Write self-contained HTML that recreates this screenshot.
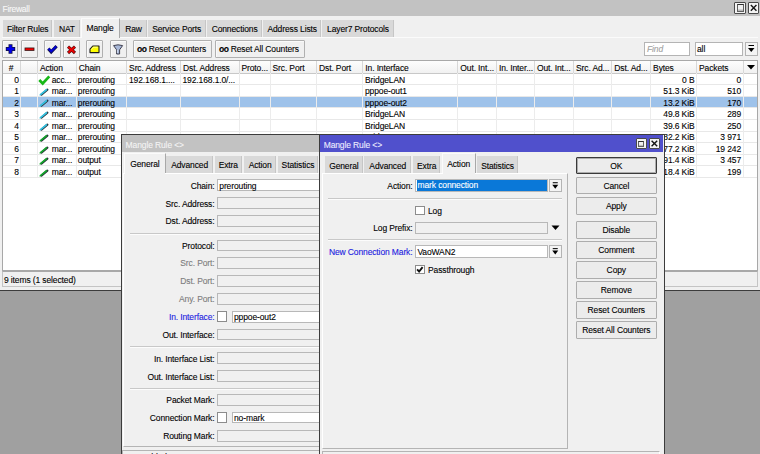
<!DOCTYPE html>
<html><head><meta charset="utf-8"><style>
html,body{margin:0;padding:0}
body{width:760px;height:454px;overflow:hidden;position:relative;background:#a0a0a0;font-family:"Liberation Sans",sans-serif;font-size:8.5px;letter-spacing:-0.12px;color:#000}
div{position:absolute}
.t{position:absolute;white-space:nowrap;line-height:10px;-webkit-text-stroke:0.1px currentColor}
svg{overflow:visible}
</style></head><body>
<div style="left:0.00px;top:0.00px;width:760.00px;height:290.00px;background:#f0f0f0"></div><div style="left:0.00px;top:290.00px;width:760.00px;height:1.20px;background:#3c3c3c"></div><div style="left:0.00px;top:0.00px;width:760.00px;height:15.60px;background:#c2c2c2"></div><span class="t" style="left:2.60px;top:3.60px;color:#f8f8f8;letter-spacing:-0.3px">Firewall</span><div style="left:734.40px;top:1.90px;width:11.40px;height:11.80px;border:1px solid #4a4a4a;box-sizing:border-box;background:#f4f4f4;border-radius:1px"></div><div style="left:737.00px;top:4.00px;width:7.00px;height:8.00px;border:1px solid #606060;border-top:1.5px solid #303030;box-sizing:border-box;background:linear-gradient(#f0f0f0 60%,#a8a8a8)"></div><div style="left:747.60px;top:1.90px;width:11.30px;height:11.80px;border:1px solid #4a4a4a;box-sizing:border-box;background:#f4f4f4;border-radius:1px"></div><svg style="position:absolute;left:747.60px;top:1.90px" width="11.30" height="11.80"><path d="M2.85 3.10L8.45 8.70M8.45 3.10L2.85 8.70" stroke="#151515" stroke-width="1.4"/></svg><div style="left:2.00px;top:37.00px;width:756.00px;height:1.00px;background:#fbfbfb"></div><div style="left:3.00px;top:20.40px;width:49.40px;height:16.60px;background:#d9d9d9;border-right:1px solid #c6c6c6;box-sizing:border-box"></div><span class="t" style="left:-22.30px;width:100px;text-align:center;top:24.00px;">Filter Rules</span><div style="left:54.30px;top:20.40px;width:25.30px;height:16.60px;background:#d9d9d9;border-right:1px solid #c6c6c6;box-sizing:border-box"></div><span class="t" style="left:16.95px;width:100px;text-align:center;top:24.00px;">NAT</span><div style="left:80.60px;top:17.60px;width:39.00px;height:20.40px;background:#f0f0f0;border:1px solid #fbfbfb;border-right:1px solid #a8a8a8;border-bottom:none;box-sizing:border-box"></div><span class="t" style="left:50.10px;width:100px;text-align:center;top:22.70px;">Mangle</span><div style="left:120.40px;top:20.40px;width:26.20px;height:16.60px;background:#d9d9d9;border-right:1px solid #c6c6c6;box-sizing:border-box"></div><span class="t" style="left:83.50px;width:100px;text-align:center;top:24.00px;">Raw</span><div style="left:147.60px;top:20.40px;width:58.20px;height:16.60px;background:#d9d9d9;border-right:1px solid #c6c6c6;box-sizing:border-box"></div><span class="t" style="left:126.70px;width:100px;text-align:center;top:24.00px;">Service Ports</span><div style="left:206.80px;top:20.40px;width:55.60px;height:16.60px;background:#d9d9d9;border-right:1px solid #c6c6c6;box-sizing:border-box"></div><span class="t" style="left:184.60px;width:100px;text-align:center;top:24.00px;">Connections</span><div style="left:263.40px;top:20.40px;width:57.60px;height:16.60px;background:#d9d9d9;border-right:1px solid #c6c6c6;box-sizing:border-box"></div><span class="t" style="left:242.20px;width:100px;text-align:center;top:24.00px;">Address Lists</span><div style="left:322.00px;top:20.40px;width:72.00px;height:16.60px;background:#d9d9d9;border-right:1px solid #c6c6c6;box-sizing:border-box"></div><span class="t" style="left:308.00px;width:100px;text-align:center;top:24.00px;">Layer7 Protocols</span><div style="left:1.60px;top:40.20px;width:16.90px;height:17.40px;border:1px solid #b0b0b0;box-sizing:border-box;border-radius:1px;background:#f0f0f0;box-shadow:inset 1px 1px 0 #fafafa"></div><div style="left:21.00px;top:40.20px;width:16.60px;height:17.40px;border:1px solid #b0b0b0;box-sizing:border-box;border-radius:1px;background:#f0f0f0;box-shadow:inset 1px 1px 0 #fafafa"></div><div style="left:44.00px;top:40.20px;width:16.60px;height:17.40px;border:1px solid #b0b0b0;box-sizing:border-box;border-radius:1px;background:#f0f0f0;box-shadow:inset 1px 1px 0 #fafafa"></div><div style="left:63.00px;top:40.20px;width:17.00px;height:17.40px;border:1px solid #b0b0b0;box-sizing:border-box;border-radius:1px;background:#f0f0f0;box-shadow:inset 1px 1px 0 #fafafa"></div><div style="left:86.00px;top:40.20px;width:17.00px;height:17.40px;border:1px solid #b0b0b0;box-sizing:border-box;border-radius:1px;background:#f0f0f0;box-shadow:inset 1px 1px 0 #fafafa"></div><div style="left:109.50px;top:40.20px;width:17.00px;height:17.40px;border:1px solid #b0b0b0;box-sizing:border-box;border-radius:1px;background:#f0f0f0;box-shadow:inset 1px 1px 0 #fafafa"></div><svg style="position:absolute;left:0;top:0" width="760" height="60"><path d="M5.8 49H15.2M10.5 44.3V53.7" stroke="#101040" stroke-width="3.9"/><path d="M6.6 49H14.4M10.5 45.1V52.9" stroke="#0000f0" stroke-width="2.3"/><path d="M24.6 49.2H34.4" stroke="#301010" stroke-width="3.3"/><path d="M25.4 49.2H33.6" stroke="#f00000" stroke-width="1.8"/><path d="M48.3 48.6L51.2 51.8L56.6 46.2" stroke="#101050" stroke-width="3.2" fill="none"/><path d="M48.6 48.6L51.2 51.4L56.3 46.4" stroke="#0000d8" stroke-width="2" fill="none"/><path d="M68 46.6L75 53M75 46.6L68 53" stroke="#501010" stroke-width="3.1"/><path d="M68.4 47L74.6 52.6M74.6 47L68.4 52.6" stroke="#f00000" stroke-width="1.9"/><path d="M90 49.2L92.8 46H99V52.6H90Z" fill="#ffff00" stroke="#1a1a1a" stroke-width="1.1" stroke-linejoin="round"/><path d="M91.3 49.6L93.4 47.2H97.6" stroke="#ffffa8" stroke-width="0.9" fill="none"/><path d="M113.6 45.6Q118 44 122.6 45.6L119.6 49.8V54H116.6V49.8Z" fill="#a8b8d8" stroke="#404050" stroke-width="1" stroke-linejoin="round"/><path d="M117.4 50V53" stroke="#e0e8f8" stroke-width="0.8"/></svg><div style="left:133.00px;top:40.20px;width:79.00px;height:17.40px;border:1px solid #b0b0b0;box-sizing:border-box;border-radius:1px;background:#f0f0f0;box-shadow:inset 1px 1px 0 #fafafa"></div><div style="left:215.00px;top:40.20px;width:90.00px;height:17.40px;border:1px solid #b0b0b0;box-sizing:border-box;border-radius:1px;background:#f0f0f0;box-shadow:inset 1px 1px 0 #fafafa"></div><span class="t" style="left:137.00px;top:44.00px;"><b style='letter-spacing:-0.5px'>oo</b> Reset Counters</span><span class="t" style="left:219.00px;top:44.00px;"><b style='letter-spacing:-0.5px'>oo</b> Reset All Counters</span><div style="left:643.80px;top:42.00px;width:46.20px;height:13.50px;border:1px solid #b4b4b4;box-sizing:border-box;background:#fff"></div><span class="t" style="left:647.00px;top:43.50px;color:#a0a0a0"><i>Find</i></span><div style="left:695.00px;top:42.00px;width:48.00px;height:13.50px;border:1px solid #b4b4b4;box-sizing:border-box;background:#fff"></div><span class="t" style="left:697.00px;top:43.50px;">all</span><div style="left:745.00px;top:42.00px;width:12.50px;height:13.50px;border:1px solid #b4b4b4;box-sizing:border-box;background:#f4f4f4"></div><svg style="position:absolute;left:745px;top:42px" width="13" height="14"><path d="M3.5 3.5H9" stroke="#000" stroke-width="1"/><path d="M3 6H9.5L6.25 10Z" fill="#000"/></svg><div style="left:1.70px;top:60.40px;width:756.30px;height:211.00px;background:#fff;border:1px solid #a8a8a8;box-sizing:border-box"></div><div style="left:2.70px;top:61.00px;width:754.30px;height:12.30px;background:linear-gradient(#fdfdfd,#f1f1f1)"></div><div style="left:2.70px;top:72.80px;width:754.30px;height:1.00px;background:#c8c8c8"></div><div style="left:19.90px;top:61.00px;width:1.00px;height:12.30px;background:#d8d8d8"></div><div style="left:36.90px;top:61.00px;width:1.00px;height:12.30px;background:#d8d8d8"></div><div style="left:75.80px;top:61.00px;width:1.00px;height:12.30px;background:#d8d8d8"></div><div style="left:126.10px;top:61.00px;width:1.00px;height:12.30px;background:#d8d8d8"></div><div style="left:180.00px;top:61.00px;width:1.00px;height:12.30px;background:#d8d8d8"></div><div style="left:238.50px;top:61.00px;width:1.00px;height:12.30px;background:#d8d8d8"></div><div style="left:269.50px;top:61.00px;width:1.00px;height:12.30px;background:#d8d8d8"></div><div style="left:316.00px;top:61.00px;width:1.00px;height:12.30px;background:#d8d8d8"></div><div style="left:362.30px;top:61.00px;width:1.00px;height:12.30px;background:#d8d8d8"></div><div style="left:457.30px;top:61.00px;width:1.00px;height:12.30px;background:#d8d8d8"></div><div style="left:495.90px;top:61.00px;width:1.00px;height:12.30px;background:#d8d8d8"></div><div style="left:533.90px;top:61.00px;width:1.00px;height:12.30px;background:#d8d8d8"></div><div style="left:573.00px;top:61.00px;width:1.00px;height:12.30px;background:#d8d8d8"></div><div style="left:611.30px;top:61.00px;width:1.00px;height:12.30px;background:#d8d8d8"></div><div style="left:650.10px;top:61.00px;width:1.00px;height:12.30px;background:#d8d8d8"></div><div style="left:696.00px;top:61.00px;width:1.00px;height:12.30px;background:#d8d8d8"></div><div style="left:742.90px;top:61.00px;width:1.00px;height:12.30px;background:#d8d8d8"></div><span class="t" style="left:-38.95px;width:100px;text-align:center;top:62.50px;">#</span><span class="t" style="left:39.90px;top:62.50px;">Action</span><span class="t" style="left:78.80px;top:62.50px;">Chain</span><span class="t" style="left:129.10px;top:62.50px;">Src. Address</span><span class="t" style="left:183.00px;top:62.50px;">Dst. Address</span><span class="t" style="left:241.50px;top:62.50px;">Proto...</span><span class="t" style="left:272.50px;top:62.50px;">Src. Port</span><span class="t" style="left:319.00px;top:62.50px;">Dst. Port</span><span class="t" style="left:365.30px;top:62.50px;">In. Interface</span><span class="t" style="left:460.30px;top:62.50px;">Out. Int...</span><span class="t" style="left:498.90px;top:62.50px;">In. Inter...</span><span class="t" style="left:536.90px;top:62.50px;">Out. Int...</span><span class="t" style="left:576.00px;top:62.50px;">Src. Ad...</span><span class="t" style="left:614.30px;top:62.50px;">Dst. Ad...</span><span class="t" style="left:653.10px;top:62.50px;">Bytes</span><span class="t" style="left:699.00px;top:62.50px;">Packets</span><svg style="position:absolute;left:744px;top:61px" width="14" height="12"><path d="M3 4H11L7 8.5Z" fill="#000"/></svg><div style="left:2.70px;top:84.36px;width:754.30px;height:1.00px;background:#e8e8e8"></div><div style="left:19.90px;top:73.30px;width:1.00px;height:11.56px;background:#ececec"></div><div style="left:36.90px;top:73.30px;width:1.00px;height:11.56px;background:#ececec"></div><div style="left:75.80px;top:73.30px;width:1.00px;height:11.56px;background:#ececec"></div><div style="left:126.10px;top:73.30px;width:1.00px;height:11.56px;background:#ececec"></div><div style="left:180.00px;top:73.30px;width:1.00px;height:11.56px;background:#ececec"></div><div style="left:238.50px;top:73.30px;width:1.00px;height:11.56px;background:#ececec"></div><div style="left:269.50px;top:73.30px;width:1.00px;height:11.56px;background:#ececec"></div><div style="left:316.00px;top:73.30px;width:1.00px;height:11.56px;background:#ececec"></div><div style="left:362.30px;top:73.30px;width:1.00px;height:11.56px;background:#ececec"></div><div style="left:457.30px;top:73.30px;width:1.00px;height:11.56px;background:#ececec"></div><div style="left:495.90px;top:73.30px;width:1.00px;height:11.56px;background:#ececec"></div><div style="left:533.90px;top:73.30px;width:1.00px;height:11.56px;background:#ececec"></div><div style="left:573.00px;top:73.30px;width:1.00px;height:11.56px;background:#ececec"></div><div style="left:611.30px;top:73.30px;width:1.00px;height:11.56px;background:#ececec"></div><div style="left:650.10px;top:73.30px;width:1.00px;height:11.56px;background:#ececec"></div><div style="left:696.00px;top:73.30px;width:1.00px;height:11.56px;background:#ececec"></div><div style="left:742.90px;top:73.30px;width:1.00px;height:11.56px;background:#ececec"></div><span class="t" style="right:741.20px;top:74.50px;">0</span><svg style="position:absolute;left:38px;top:74.30px" width="13" height="10"><path d="M1.3 6L4.7 9.5L11.3 2.4" stroke="#18b818" stroke-width="2.7" fill="none"/></svg><span class="t" style="left:51.70px;top:74.50px;">acc...</span><span class="t" style="left:77.80px;top:74.50px;">prerouting</span><span class="t" style="left:129.00px;top:74.50px;">192.168.1....</span><span class="t" style="left:182.50px;top:74.50px;">192.168.1.0/...</span><span class="t" style="left:365.00px;top:74.50px;">BridgeLAN</span><span class="t" style="right:65.50px;top:74.50px;">0 B</span><span class="t" style="right:19.00px;top:74.50px;">0</span><div style="left:2.70px;top:95.92px;width:754.30px;height:1.00px;background:#e8e8e8"></div><div style="left:19.90px;top:84.86px;width:1.00px;height:11.56px;background:#ececec"></div><div style="left:36.90px;top:84.86px;width:1.00px;height:11.56px;background:#ececec"></div><div style="left:75.80px;top:84.86px;width:1.00px;height:11.56px;background:#ececec"></div><div style="left:126.10px;top:84.86px;width:1.00px;height:11.56px;background:#ececec"></div><div style="left:180.00px;top:84.86px;width:1.00px;height:11.56px;background:#ececec"></div><div style="left:238.50px;top:84.86px;width:1.00px;height:11.56px;background:#ececec"></div><div style="left:269.50px;top:84.86px;width:1.00px;height:11.56px;background:#ececec"></div><div style="left:316.00px;top:84.86px;width:1.00px;height:11.56px;background:#ececec"></div><div style="left:362.30px;top:84.86px;width:1.00px;height:11.56px;background:#ececec"></div><div style="left:457.30px;top:84.86px;width:1.00px;height:11.56px;background:#ececec"></div><div style="left:495.90px;top:84.86px;width:1.00px;height:11.56px;background:#ececec"></div><div style="left:533.90px;top:84.86px;width:1.00px;height:11.56px;background:#ececec"></div><div style="left:573.00px;top:84.86px;width:1.00px;height:11.56px;background:#ececec"></div><div style="left:611.30px;top:84.86px;width:1.00px;height:11.56px;background:#ececec"></div><div style="left:650.10px;top:84.86px;width:1.00px;height:11.56px;background:#ececec"></div><div style="left:696.00px;top:84.86px;width:1.00px;height:11.56px;background:#ececec"></div><div style="left:742.90px;top:84.86px;width:1.00px;height:11.56px;background:#ececec"></div><span class="t" style="right:741.20px;top:86.06px;">1</span><svg style="position:absolute;left:38px;top:84.86px" width="12" height="12"><path d="M3.4 9.6L9.4 4.6" stroke="#2a3038" stroke-width="2.1" stroke-linecap="round"/><path d="M2.9 9.4L8.9 4.4" stroke="#34c4e4" stroke-width="1.8"/><path d="M1.6 10.3L3.2 9.3" stroke="#34c4e4" stroke-width="1.2"/></svg><span class="t" style="left:51.70px;top:86.06px;">mar...</span><span class="t" style="left:77.80px;top:86.06px;">prerouting</span><span class="t" style="left:129.00px;top:86.06px;"></span><span class="t" style="left:182.50px;top:86.06px;"></span><span class="t" style="left:365.00px;top:86.06px;">pppoe-out1</span><span class="t" style="right:65.50px;top:86.06px;">51.3 KiB</span><span class="t" style="right:19.00px;top:86.06px;">510</span><div style="left:2.70px;top:96.92px;width:754.30px;height:11.06px;background:#9ec2ea"></div><div style="left:2.70px;top:107.48px;width:754.30px;height:1.00px;background:#e8e8e8"></div><div style="left:19.90px;top:96.42px;width:1.00px;height:11.56px;background:#ececec"></div><div style="left:36.90px;top:96.42px;width:1.00px;height:11.56px;background:#ececec"></div><div style="left:75.80px;top:96.42px;width:1.00px;height:11.56px;background:#ececec"></div><div style="left:126.10px;top:96.42px;width:1.00px;height:11.56px;background:#ececec"></div><div style="left:180.00px;top:96.42px;width:1.00px;height:11.56px;background:#ececec"></div><div style="left:238.50px;top:96.42px;width:1.00px;height:11.56px;background:#ececec"></div><div style="left:269.50px;top:96.42px;width:1.00px;height:11.56px;background:#ececec"></div><div style="left:316.00px;top:96.42px;width:1.00px;height:11.56px;background:#ececec"></div><div style="left:362.30px;top:96.42px;width:1.00px;height:11.56px;background:#ececec"></div><div style="left:457.30px;top:96.42px;width:1.00px;height:11.56px;background:#ececec"></div><div style="left:495.90px;top:96.42px;width:1.00px;height:11.56px;background:#ececec"></div><div style="left:533.90px;top:96.42px;width:1.00px;height:11.56px;background:#ececec"></div><div style="left:573.00px;top:96.42px;width:1.00px;height:11.56px;background:#ececec"></div><div style="left:611.30px;top:96.42px;width:1.00px;height:11.56px;background:#ececec"></div><div style="left:650.10px;top:96.42px;width:1.00px;height:11.56px;background:#ececec"></div><div style="left:696.00px;top:96.42px;width:1.00px;height:11.56px;background:#ececec"></div><div style="left:742.90px;top:96.42px;width:1.00px;height:11.56px;background:#ececec"></div><span class="t" style="right:741.20px;top:97.62px;">2</span><svg style="position:absolute;left:38px;top:96.42px" width="12" height="12"><path d="M3.4 9.6L9.4 4.6" stroke="#2a3038" stroke-width="2.1" stroke-linecap="round"/><path d="M2.9 9.4L8.9 4.4" stroke="#34c4e4" stroke-width="1.8"/><path d="M1.6 10.3L3.2 9.3" stroke="#34c4e4" stroke-width="1.2"/></svg><span class="t" style="left:51.70px;top:97.62px;">mar...</span><span class="t" style="left:77.80px;top:97.62px;">prerouting</span><span class="t" style="left:129.00px;top:97.62px;"></span><span class="t" style="left:182.50px;top:97.62px;"></span><span class="t" style="left:365.00px;top:97.62px;">pppoe-out2</span><span class="t" style="right:65.50px;top:97.62px;">13.2 KiB</span><span class="t" style="right:19.00px;top:97.62px;">170</span><div style="left:2.70px;top:119.04px;width:754.30px;height:1.00px;background:#e8e8e8"></div><div style="left:19.90px;top:107.98px;width:1.00px;height:11.56px;background:#ececec"></div><div style="left:36.90px;top:107.98px;width:1.00px;height:11.56px;background:#ececec"></div><div style="left:75.80px;top:107.98px;width:1.00px;height:11.56px;background:#ececec"></div><div style="left:126.10px;top:107.98px;width:1.00px;height:11.56px;background:#ececec"></div><div style="left:180.00px;top:107.98px;width:1.00px;height:11.56px;background:#ececec"></div><div style="left:238.50px;top:107.98px;width:1.00px;height:11.56px;background:#ececec"></div><div style="left:269.50px;top:107.98px;width:1.00px;height:11.56px;background:#ececec"></div><div style="left:316.00px;top:107.98px;width:1.00px;height:11.56px;background:#ececec"></div><div style="left:362.30px;top:107.98px;width:1.00px;height:11.56px;background:#ececec"></div><div style="left:457.30px;top:107.98px;width:1.00px;height:11.56px;background:#ececec"></div><div style="left:495.90px;top:107.98px;width:1.00px;height:11.56px;background:#ececec"></div><div style="left:533.90px;top:107.98px;width:1.00px;height:11.56px;background:#ececec"></div><div style="left:573.00px;top:107.98px;width:1.00px;height:11.56px;background:#ececec"></div><div style="left:611.30px;top:107.98px;width:1.00px;height:11.56px;background:#ececec"></div><div style="left:650.10px;top:107.98px;width:1.00px;height:11.56px;background:#ececec"></div><div style="left:696.00px;top:107.98px;width:1.00px;height:11.56px;background:#ececec"></div><div style="left:742.90px;top:107.98px;width:1.00px;height:11.56px;background:#ececec"></div><span class="t" style="right:741.20px;top:109.18px;">3</span><svg style="position:absolute;left:38px;top:107.98px" width="12" height="12"><path d="M3.4 9.6L9.4 4.6" stroke="#2a3038" stroke-width="2.1" stroke-linecap="round"/><path d="M2.9 9.4L8.9 4.4" stroke="#34c4e4" stroke-width="1.8"/><path d="M1.6 10.3L3.2 9.3" stroke="#34c4e4" stroke-width="1.2"/></svg><span class="t" style="left:51.70px;top:109.18px;">mar...</span><span class="t" style="left:77.80px;top:109.18px;">prerouting</span><span class="t" style="left:129.00px;top:109.18px;"></span><span class="t" style="left:182.50px;top:109.18px;"></span><span class="t" style="left:365.00px;top:109.18px;">BridgeLAN</span><span class="t" style="right:65.50px;top:109.18px;">49.8 KiB</span><span class="t" style="right:19.00px;top:109.18px;">289</span><div style="left:2.70px;top:130.60px;width:754.30px;height:1.00px;background:#e8e8e8"></div><div style="left:19.90px;top:119.54px;width:1.00px;height:11.56px;background:#ececec"></div><div style="left:36.90px;top:119.54px;width:1.00px;height:11.56px;background:#ececec"></div><div style="left:75.80px;top:119.54px;width:1.00px;height:11.56px;background:#ececec"></div><div style="left:126.10px;top:119.54px;width:1.00px;height:11.56px;background:#ececec"></div><div style="left:180.00px;top:119.54px;width:1.00px;height:11.56px;background:#ececec"></div><div style="left:238.50px;top:119.54px;width:1.00px;height:11.56px;background:#ececec"></div><div style="left:269.50px;top:119.54px;width:1.00px;height:11.56px;background:#ececec"></div><div style="left:316.00px;top:119.54px;width:1.00px;height:11.56px;background:#ececec"></div><div style="left:362.30px;top:119.54px;width:1.00px;height:11.56px;background:#ececec"></div><div style="left:457.30px;top:119.54px;width:1.00px;height:11.56px;background:#ececec"></div><div style="left:495.90px;top:119.54px;width:1.00px;height:11.56px;background:#ececec"></div><div style="left:533.90px;top:119.54px;width:1.00px;height:11.56px;background:#ececec"></div><div style="left:573.00px;top:119.54px;width:1.00px;height:11.56px;background:#ececec"></div><div style="left:611.30px;top:119.54px;width:1.00px;height:11.56px;background:#ececec"></div><div style="left:650.10px;top:119.54px;width:1.00px;height:11.56px;background:#ececec"></div><div style="left:696.00px;top:119.54px;width:1.00px;height:11.56px;background:#ececec"></div><div style="left:742.90px;top:119.54px;width:1.00px;height:11.56px;background:#ececec"></div><span class="t" style="right:741.20px;top:120.74px;">4</span><svg style="position:absolute;left:38px;top:119.54px" width="12" height="12"><path d="M3.4 9.6L9.4 4.6" stroke="#2a3038" stroke-width="2.1" stroke-linecap="round"/><path d="M2.9 9.4L8.9 4.4" stroke="#34c4e4" stroke-width="1.8"/><path d="M1.6 10.3L3.2 9.3" stroke="#34c4e4" stroke-width="1.2"/></svg><span class="t" style="left:51.70px;top:120.74px;">mar...</span><span class="t" style="left:77.80px;top:120.74px;">prerouting</span><span class="t" style="left:129.00px;top:120.74px;"></span><span class="t" style="left:182.50px;top:120.74px;"></span><span class="t" style="left:365.00px;top:120.74px;">BridgeLAN</span><span class="t" style="right:65.50px;top:120.74px;">39.6 KiB</span><span class="t" style="right:19.00px;top:120.74px;">250</span><div style="left:2.70px;top:142.16px;width:754.30px;height:1.00px;background:#e8e8e8"></div><div style="left:19.90px;top:131.10px;width:1.00px;height:11.56px;background:#ececec"></div><div style="left:36.90px;top:131.10px;width:1.00px;height:11.56px;background:#ececec"></div><div style="left:75.80px;top:131.10px;width:1.00px;height:11.56px;background:#ececec"></div><div style="left:126.10px;top:131.10px;width:1.00px;height:11.56px;background:#ececec"></div><div style="left:180.00px;top:131.10px;width:1.00px;height:11.56px;background:#ececec"></div><div style="left:238.50px;top:131.10px;width:1.00px;height:11.56px;background:#ececec"></div><div style="left:269.50px;top:131.10px;width:1.00px;height:11.56px;background:#ececec"></div><div style="left:316.00px;top:131.10px;width:1.00px;height:11.56px;background:#ececec"></div><div style="left:362.30px;top:131.10px;width:1.00px;height:11.56px;background:#ececec"></div><div style="left:457.30px;top:131.10px;width:1.00px;height:11.56px;background:#ececec"></div><div style="left:495.90px;top:131.10px;width:1.00px;height:11.56px;background:#ececec"></div><div style="left:533.90px;top:131.10px;width:1.00px;height:11.56px;background:#ececec"></div><div style="left:573.00px;top:131.10px;width:1.00px;height:11.56px;background:#ececec"></div><div style="left:611.30px;top:131.10px;width:1.00px;height:11.56px;background:#ececec"></div><div style="left:650.10px;top:131.10px;width:1.00px;height:11.56px;background:#ececec"></div><div style="left:696.00px;top:131.10px;width:1.00px;height:11.56px;background:#ececec"></div><div style="left:742.90px;top:131.10px;width:1.00px;height:11.56px;background:#ececec"></div><span class="t" style="right:741.20px;top:132.30px;">5</span><svg style="position:absolute;left:38px;top:131.10px" width="12" height="12"><path d="M3.4 9.6L9.4 4.6" stroke="#2a3038" stroke-width="2.1" stroke-linecap="round"/><path d="M2.9 9.4L8.9 4.4" stroke="#14a82c" stroke-width="1.8"/><path d="M1.6 10.3L3.2 9.3" stroke="#14a82c" stroke-width="1.2"/></svg><span class="t" style="left:51.70px;top:132.30px;">mar...</span><span class="t" style="left:77.80px;top:132.30px;">prerouting</span><span class="t" style="left:129.00px;top:132.30px;"></span><span class="t" style="left:182.50px;top:132.30px;"></span><span class="t" style="left:365.00px;top:132.30px;">BridgeLAN</span><span class="t" style="right:65.50px;top:132.30px;">82.2 KiB</span><span class="t" style="right:19.00px;top:132.30px;">3 971</span><div style="left:2.70px;top:153.72px;width:754.30px;height:1.00px;background:#e8e8e8"></div><div style="left:19.90px;top:142.66px;width:1.00px;height:11.56px;background:#ececec"></div><div style="left:36.90px;top:142.66px;width:1.00px;height:11.56px;background:#ececec"></div><div style="left:75.80px;top:142.66px;width:1.00px;height:11.56px;background:#ececec"></div><div style="left:126.10px;top:142.66px;width:1.00px;height:11.56px;background:#ececec"></div><div style="left:180.00px;top:142.66px;width:1.00px;height:11.56px;background:#ececec"></div><div style="left:238.50px;top:142.66px;width:1.00px;height:11.56px;background:#ececec"></div><div style="left:269.50px;top:142.66px;width:1.00px;height:11.56px;background:#ececec"></div><div style="left:316.00px;top:142.66px;width:1.00px;height:11.56px;background:#ececec"></div><div style="left:362.30px;top:142.66px;width:1.00px;height:11.56px;background:#ececec"></div><div style="left:457.30px;top:142.66px;width:1.00px;height:11.56px;background:#ececec"></div><div style="left:495.90px;top:142.66px;width:1.00px;height:11.56px;background:#ececec"></div><div style="left:533.90px;top:142.66px;width:1.00px;height:11.56px;background:#ececec"></div><div style="left:573.00px;top:142.66px;width:1.00px;height:11.56px;background:#ececec"></div><div style="left:611.30px;top:142.66px;width:1.00px;height:11.56px;background:#ececec"></div><div style="left:650.10px;top:142.66px;width:1.00px;height:11.56px;background:#ececec"></div><div style="left:696.00px;top:142.66px;width:1.00px;height:11.56px;background:#ececec"></div><div style="left:742.90px;top:142.66px;width:1.00px;height:11.56px;background:#ececec"></div><span class="t" style="right:741.20px;top:143.86px;">6</span><svg style="position:absolute;left:38px;top:142.66px" width="12" height="12"><path d="M3.4 9.6L9.4 4.6" stroke="#2a3038" stroke-width="2.1" stroke-linecap="round"/><path d="M2.9 9.4L8.9 4.4" stroke="#14a82c" stroke-width="1.8"/><path d="M1.6 10.3L3.2 9.3" stroke="#14a82c" stroke-width="1.2"/></svg><span class="t" style="left:51.70px;top:143.86px;">mar...</span><span class="t" style="left:77.80px;top:143.86px;">prerouting</span><span class="t" style="left:129.00px;top:143.86px;"></span><span class="t" style="left:182.50px;top:143.86px;"></span><span class="t" style="left:365.00px;top:143.86px;">BridgeLAN</span><span class="t" style="right:65.50px;top:143.86px;">77.2 KiB</span><span class="t" style="right:19.00px;top:143.86px;">19 242</span><div style="left:2.70px;top:165.28px;width:754.30px;height:1.00px;background:#e8e8e8"></div><div style="left:19.90px;top:154.22px;width:1.00px;height:11.56px;background:#ececec"></div><div style="left:36.90px;top:154.22px;width:1.00px;height:11.56px;background:#ececec"></div><div style="left:75.80px;top:154.22px;width:1.00px;height:11.56px;background:#ececec"></div><div style="left:126.10px;top:154.22px;width:1.00px;height:11.56px;background:#ececec"></div><div style="left:180.00px;top:154.22px;width:1.00px;height:11.56px;background:#ececec"></div><div style="left:238.50px;top:154.22px;width:1.00px;height:11.56px;background:#ececec"></div><div style="left:269.50px;top:154.22px;width:1.00px;height:11.56px;background:#ececec"></div><div style="left:316.00px;top:154.22px;width:1.00px;height:11.56px;background:#ececec"></div><div style="left:362.30px;top:154.22px;width:1.00px;height:11.56px;background:#ececec"></div><div style="left:457.30px;top:154.22px;width:1.00px;height:11.56px;background:#ececec"></div><div style="left:495.90px;top:154.22px;width:1.00px;height:11.56px;background:#ececec"></div><div style="left:533.90px;top:154.22px;width:1.00px;height:11.56px;background:#ececec"></div><div style="left:573.00px;top:154.22px;width:1.00px;height:11.56px;background:#ececec"></div><div style="left:611.30px;top:154.22px;width:1.00px;height:11.56px;background:#ececec"></div><div style="left:650.10px;top:154.22px;width:1.00px;height:11.56px;background:#ececec"></div><div style="left:696.00px;top:154.22px;width:1.00px;height:11.56px;background:#ececec"></div><div style="left:742.90px;top:154.22px;width:1.00px;height:11.56px;background:#ececec"></div><span class="t" style="right:741.20px;top:155.42px;">7</span><svg style="position:absolute;left:38px;top:154.22px" width="12" height="12"><path d="M3.4 9.6L9.4 4.6" stroke="#2a3038" stroke-width="2.1" stroke-linecap="round"/><path d="M2.9 9.4L8.9 4.4" stroke="#14a82c" stroke-width="1.8"/><path d="M1.6 10.3L3.2 9.3" stroke="#14a82c" stroke-width="1.2"/></svg><span class="t" style="left:51.70px;top:155.42px;">mar...</span><span class="t" style="left:77.80px;top:155.42px;">output</span><span class="t" style="left:129.00px;top:155.42px;"></span><span class="t" style="left:182.50px;top:155.42px;"></span><span class="t" style="left:365.00px;top:155.42px;"></span><span class="t" style="right:65.50px;top:155.42px;">91.4 KiB</span><span class="t" style="right:19.00px;top:155.42px;">3 457</span><div style="left:2.70px;top:176.84px;width:754.30px;height:1.00px;background:#e8e8e8"></div><div style="left:19.90px;top:165.78px;width:1.00px;height:11.56px;background:#ececec"></div><div style="left:36.90px;top:165.78px;width:1.00px;height:11.56px;background:#ececec"></div><div style="left:75.80px;top:165.78px;width:1.00px;height:11.56px;background:#ececec"></div><div style="left:126.10px;top:165.78px;width:1.00px;height:11.56px;background:#ececec"></div><div style="left:180.00px;top:165.78px;width:1.00px;height:11.56px;background:#ececec"></div><div style="left:238.50px;top:165.78px;width:1.00px;height:11.56px;background:#ececec"></div><div style="left:269.50px;top:165.78px;width:1.00px;height:11.56px;background:#ececec"></div><div style="left:316.00px;top:165.78px;width:1.00px;height:11.56px;background:#ececec"></div><div style="left:362.30px;top:165.78px;width:1.00px;height:11.56px;background:#ececec"></div><div style="left:457.30px;top:165.78px;width:1.00px;height:11.56px;background:#ececec"></div><div style="left:495.90px;top:165.78px;width:1.00px;height:11.56px;background:#ececec"></div><div style="left:533.90px;top:165.78px;width:1.00px;height:11.56px;background:#ececec"></div><div style="left:573.00px;top:165.78px;width:1.00px;height:11.56px;background:#ececec"></div><div style="left:611.30px;top:165.78px;width:1.00px;height:11.56px;background:#ececec"></div><div style="left:650.10px;top:165.78px;width:1.00px;height:11.56px;background:#ececec"></div><div style="left:696.00px;top:165.78px;width:1.00px;height:11.56px;background:#ececec"></div><div style="left:742.90px;top:165.78px;width:1.00px;height:11.56px;background:#ececec"></div><span class="t" style="right:741.20px;top:166.98px;">8</span><svg style="position:absolute;left:38px;top:165.78px" width="12" height="12"><path d="M3.4 9.6L9.4 4.6" stroke="#2a3038" stroke-width="2.1" stroke-linecap="round"/><path d="M2.9 9.4L8.9 4.4" stroke="#14a82c" stroke-width="1.8"/><path d="M1.6 10.3L3.2 9.3" stroke="#14a82c" stroke-width="1.2"/></svg><span class="t" style="left:51.70px;top:166.98px;">mar...</span><span class="t" style="left:77.80px;top:166.98px;">output</span><span class="t" style="left:129.00px;top:166.98px;"></span><span class="t" style="left:182.50px;top:166.98px;"></span><span class="t" style="left:365.00px;top:166.98px;"></span><span class="t" style="right:65.50px;top:166.98px;">18.4 KiB</span><span class="t" style="right:19.00px;top:166.98px;">199</span><div style="left:1.70px;top:271.40px;width:756.30px;height:15.60px;background:#f0f0f0;border:1px solid #c4c4c4;border-top:1px solid #a8a8a8;box-sizing:border-box"></div><span class="t" style="left:4.00px;top:274.50px;">9 items (1 selected)</span><div style="left:120.70px;top:134.00px;width:339.30px;height:326.00px;background:#f0f0f0;border:1px solid #3c3c3c;box-sizing:border-box"></div><div style="left:121.70px;top:135.00px;width:337.30px;height:17.20px;background:#c2c2c2"></div><span class="t" style="left:125.60px;top:139.80px;color:#f4f4f4">Mangle Rule &lt;&gt;</span><div style="left:124.30px;top:153.40px;width:41.30px;height:20.40px;background:#f0f0f0;border:1px solid #fbfbfb;border-right:1px solid #a8a8a8;border-bottom:none;box-sizing:border-box"></div><span class="t" style="left:94.95px;width:100px;text-align:center;top:159.00px;">General</span><div style="left:166.30px;top:155.80px;width:46.70px;height:17.00px;background:#d9d9d9;border-right:1px solid #c6c6c6;box-sizing:border-box"></div><span class="t" style="left:139.65px;width:100px;text-align:center;top:160.30px;">Advanced</span><div style="left:214.50px;top:155.80px;width:27.50px;height:17.00px;background:#d9d9d9;border-right:1px solid #c6c6c6;box-sizing:border-box"></div><span class="t" style="left:178.25px;width:100px;text-align:center;top:160.30px;">Extra</span><div style="left:243.70px;top:155.80px;width:32.80px;height:17.00px;background:#d9d9d9;border-right:1px solid #c6c6c6;box-sizing:border-box"></div><span class="t" style="left:210.10px;width:100px;text-align:center;top:160.30px;">Action</span><div style="left:278.00px;top:155.80px;width:40.00px;height:17.00px;background:#d9d9d9;border-right:1px solid #c6c6c6;box-sizing:border-box"></div><span class="t" style="left:248.00px;width:100px;text-align:center;top:160.30px;">Statistics</span><div style="left:123.00px;top:172.80px;width:337.00px;height:274.00px;border:1px solid #fff;border-right-color:#b4b4b4;border-bottom-color:#b4b4b4;box-sizing:border-box"></div><div style="left:125.30px;top:172.80px;width:39.30px;height:1.20px;background:#f0f0f0"></div><div style="left:122.00px;top:449.70px;width:338.00px;height:20.30px;border:1px solid #b4b4b4;border-right-color:#fff;border-bottom-color:#fff;box-sizing:border-box"></div><span class="t" style="left:137.50px;top:451.60px;">enabled</span><span class="t" style="right:545.50px;top:180.60px;color:#000">Chain:</span><div style="left:217.30px;top:179.40px;width:242.70px;height:11.90px;border:1px solid #b8b8b8;box-sizing:border-box;background:#fff"></div><span class="t" style="left:219.30px;top:180.60px;">prerouting</span><span class="t" style="right:545.50px;top:198.50px;color:#000">Src. Address:</span><div style="left:217.30px;top:197.30px;width:242.70px;height:12.00px;border:1px solid #b8b8b8;box-sizing:border-box;background:#f0f0f0"></div><span class="t" style="right:545.50px;top:216.40px;color:#000">Dst. Address:</span><div style="left:217.30px;top:215.20px;width:242.70px;height:11.80px;border:1px solid #b8b8b8;box-sizing:border-box;background:#f0f0f0"></div><span class="t" style="right:545.50px;top:240.90px;color:#000">Protocol:</span><div style="left:217.30px;top:239.70px;width:242.70px;height:11.60px;border:1px solid #b8b8b8;box-sizing:border-box;background:#f0f0f0"></div><span class="t" style="right:545.50px;top:258.00px;color:#7c7c7c">Src. Port:</span><div style="left:217.30px;top:256.80px;width:242.70px;height:11.90px;border:1px solid #b8b8b8;box-sizing:border-box;background:#f0f0f0"></div><span class="t" style="right:545.50px;top:276.00px;color:#7c7c7c">Dst. Port:</span><div style="left:217.30px;top:274.80px;width:242.70px;height:11.80px;border:1px solid #b8b8b8;box-sizing:border-box;background:#f0f0f0"></div><span class="t" style="right:545.50px;top:293.90px;color:#7c7c7c">Any. Port:</span><div style="left:217.30px;top:292.70px;width:242.70px;height:11.90px;border:1px solid #b8b8b8;box-sizing:border-box;background:#f0f0f0"></div><span class="t" style="right:545.50px;top:311.90px;color:#2020e0">In. Interface:</span><div style="left:217.30px;top:311.00px;width:9.70px;height:11.30px;border:1px solid #8c8c8c;box-sizing:border-box;background:#fff"></div><div style="left:232.00px;top:310.70px;width:228.00px;height:11.90px;border:1px solid #b8b8b8;box-sizing:border-box;background:#fff"></div><span class="t" style="left:234.00px;top:311.90px;">pppoe-out2</span><span class="t" style="right:545.50px;top:329.80px;color:#000">Out. Interface:</span><div style="left:217.30px;top:328.60px;width:242.70px;height:11.90px;border:1px solid #b8b8b8;box-sizing:border-box;background:#f0f0f0"></div><span class="t" style="right:545.50px;top:353.60px;color:#000">In. Interface List:</span><div style="left:217.30px;top:352.40px;width:242.70px;height:11.90px;border:1px solid #b8b8b8;box-sizing:border-box;background:#f0f0f0"></div><span class="t" style="right:545.50px;top:371.60px;color:#000">Out. Interface List:</span><div style="left:217.30px;top:370.40px;width:242.70px;height:11.60px;border:1px solid #b8b8b8;box-sizing:border-box;background:#f0f0f0"></div><span class="t" style="right:545.50px;top:395.10px;color:#000">Packet Mark:</span><div style="left:217.30px;top:393.90px;width:242.70px;height:11.90px;border:1px solid #b8b8b8;box-sizing:border-box;background:#f0f0f0"></div><span class="t" style="right:545.50px;top:413.00px;color:#000">Connection Mark:</span><div style="left:217.30px;top:412.10px;width:9.70px;height:11.00px;border:1px solid #8c8c8c;box-sizing:border-box;background:#fff"></div><div style="left:232.00px;top:411.80px;width:228.00px;height:11.60px;border:1px solid #b8b8b8;box-sizing:border-box;background:#fff"></div><span class="t" style="left:234.00px;top:413.00px;">no-mark</span><span class="t" style="right:545.50px;top:431.00px;color:#000">Routing Mark:</span><div style="left:217.30px;top:429.80px;width:242.70px;height:11.90px;border:1px solid #b8b8b8;box-sizing:border-box;background:#f0f0f0"></div><div style="left:129.70px;top:232.80px;width:330.30px;height:1.00px;background:#c8c8c8"></div><div style="left:129.70px;top:233.80px;width:330.30px;height:0.80px;background:#fcfcfc"></div><div style="left:129.70px;top:345.50px;width:330.30px;height:1.00px;background:#c8c8c8"></div><div style="left:129.70px;top:346.50px;width:330.30px;height:0.80px;background:#fcfcfc"></div><div style="left:129.70px;top:387.90px;width:330.30px;height:1.00px;background:#c8c8c8"></div><div style="left:129.70px;top:388.90px;width:330.30px;height:0.80px;background:#fcfcfc"></div><div style="left:319.00px;top:134.00px;width:345.50px;height:336.00px;background:#f0f0f0;border:1px solid #3c3c3c;border-right:1.6px solid #3c3c3c;box-sizing:border-box"></div><div style="left:320.00px;top:135.00px;width:342.90px;height:16.60px;background:#5050cc"></div><span class="t" style="left:323.70px;top:139.80px;color:#ececff">Mangle Rule &lt;&gt;</span><div style="left:635.70px;top:138.30px;width:11.10px;height:11.00px;border:1px solid #4a4a4a;box-sizing:border-box;background:#f4f4f4;border-radius:1px"></div><div style="left:638.00px;top:141.00px;width:6.00px;height:6.00px;border:1px solid #606060;border-top:1.5px solid #303030;box-sizing:border-box;background:linear-gradient(#f0f0f0 60%,#a8a8a8)"></div><div style="left:649.00px;top:138.30px;width:10.80px;height:11.00px;border:1px solid #4a4a4a;box-sizing:border-box;background:#f4f4f4;border-radius:1px"></div><svg style="position:absolute;left:649.00px;top:138.30px" width="10.80" height="11.00"><path d="M2.60 2.70L8.20 8.30M8.20 2.70L2.60 8.30" stroke="#151515" stroke-width="1.4"/></svg><div style="left:325.00px;top:156.30px;width:37.70px;height:16.50px;background:#d9d9d9;border-right:1px solid #c6c6c6;box-sizing:border-box"></div><span class="t" style="left:293.85px;width:100px;text-align:center;top:160.50px;">General</span><div style="left:364.20px;top:156.30px;width:47.20px;height:16.50px;background:#d9d9d9;border-right:1px solid #c6c6c6;box-sizing:border-box"></div><span class="t" style="left:337.80px;width:100px;text-align:center;top:160.50px;">Advanced</span><div style="left:412.80px;top:156.30px;width:27.70px;height:16.50px;background:#d9d9d9;border-right:1px solid #c6c6c6;box-sizing:border-box"></div><span class="t" style="left:376.65px;width:100px;text-align:center;top:160.50px;">Extra</span><div style="left:441.50px;top:153.40px;width:34.30px;height:20.40px;background:#f0f0f0;border:1px solid #fbfbfb;border-right:1px solid #a8a8a8;border-bottom:none;box-sizing:border-box"></div><span class="t" style="left:408.65px;width:100px;text-align:center;top:159.20px;">Action</span><div style="left:476.80px;top:156.30px;width:41.60px;height:16.50px;background:#d9d9d9;border-right:1px solid #c6c6c6;box-sizing:border-box"></div><span class="t" style="left:447.60px;width:100px;text-align:center;top:160.50px;">Statistics</span><div style="left:321.80px;top:172.80px;width:246.20px;height:276.00px;border:1px solid #fff;border-right-color:#b4b4b4;border-bottom-color:#b4b4b4;box-sizing:border-box"></div><div style="left:442.50px;top:172.80px;width:32.30px;height:1.20px;background:#f0f0f0"></div><div style="left:321.60px;top:451.30px;width:338.40px;height:18.70px;border:1px solid #b4b4b4;border-right-color:#fff;border-bottom-color:#fff;box-sizing:border-box"></div><div style="left:415.40px;top:179.20px;width:132.60px;height:12.80px;border:1px solid #b8b8b8;box-sizing:border-box;background:#fff"></div><div style="left:416.60px;top:180.40px;width:130.20px;height:10.40px;background:#0a78d8"></div><span class="t" style="left:417.50px;top:180.20px;color:#fff">mark connection</span><span class="t" style="right:347.50px;top:180.80px;">Action:</span><div style="left:549.30px;top:179.20px;width:12.50px;height:12.80px;border:1px solid #b4b4b4;box-sizing:border-box;background:#f4f4f4"></div><svg style="position:absolute;left:549.30px;top:179.20px" width="12.50" height="12.80"><path d="M3.75 3.70H8.75" stroke="#111" stroke-width="1.1"/><path d="M3.25 5.70H9.25L6.25 9.70Z" fill="#000"/></svg><div style="left:328.00px;top:198.20px;width:234.00px;height:1.00px;background:#c8c8c8"></div><div style="left:328.00px;top:199.20px;width:234.00px;height:0.80px;background:#fcfcfc"></div><div style="left:328.00px;top:239.00px;width:234.00px;height:1.00px;background:#c8c8c8"></div><div style="left:328.00px;top:240.00px;width:234.00px;height:0.80px;background:#fcfcfc"></div><div style="left:415.40px;top:206.00px;width:9.20px;height:8.80px;border:1px solid #8c8c8c;box-sizing:border-box;background:#fff"></div><span class="t" style="left:428.00px;top:205.50px;">Log</span><span class="t" style="right:347.50px;top:222.80px;">Log Prefix:</span><div style="left:415.40px;top:221.70px;width:132.60px;height:12.20px;border:1px solid #b8b8b8;box-sizing:border-box;background:#f0f0f0"></div><svg style="position:absolute;left:550px;top:224px" width="12" height="8"><path d="M1.5 1.5H9.5L5.5 6Z" fill="#000"/></svg><span class="t" style="right:347.50px;top:246.50px;color:#2020e0">New Connection Mark:</span><div style="left:415.40px;top:245.40px;width:132.60px;height:12.60px;border:1px solid #b8b8b8;box-sizing:border-box;background:#fff"></div><span class="t" style="left:417.40px;top:246.60px;">VaoWAN2</span><div style="left:549.30px;top:245.40px;width:12.50px;height:12.60px;border:1px solid #b4b4b4;box-sizing:border-box;background:#f4f4f4"></div><svg style="position:absolute;left:549.30px;top:245.40px" width="12.50" height="12.60"><path d="M3.75 3.60H8.75" stroke="#111" stroke-width="1.1"/><path d="M3.25 5.60H9.25L6.25 9.60Z" fill="#000"/></svg><div style="left:415.40px;top:265.00px;width:9.20px;height:9.00px;border:1px solid #8c8c8c;box-sizing:border-box;background:#fff"></div><svg style="position:absolute;left:415.40px;top:265.00px" width="9.20" height="9.00"><path d="M2.1 4.4L4.1 6.6L7.6 2.2" stroke="#111" stroke-width="1.9" fill="none"/></svg><span class="t" style="left:428.00px;top:264.50px;">Passthrough</span><div style="left:576.00px;top:156.50px;width:80.60px;height:17.70px;border:1px solid #3a3a3a;box-sizing:border-box;background:#ececec;box-shadow:inset 0 0 0 1px #adadad;border-radius:1px"></div><span class="t" style="left:566.30px;width:100px;text-align:center;top:160.65px;">OK</span><div style="left:576.00px;top:176.60px;width:80.60px;height:17.80px;border:1px solid #adadad;box-sizing:border-box;background:#ececec;border-radius:1px"></div><span class="t" style="left:566.30px;width:100px;text-align:center;top:180.80px;">Cancel</span><div style="left:576.00px;top:197.00px;width:80.60px;height:17.50px;border:1px solid #adadad;box-sizing:border-box;background:#ececec;border-radius:1px"></div><span class="t" style="left:566.30px;width:100px;text-align:center;top:201.05px;">Apply</span><div style="left:576.00px;top:221.00px;width:80.60px;height:17.50px;border:1px solid #adadad;box-sizing:border-box;background:#ececec;border-radius:1px"></div><span class="t" style="left:566.30px;width:100px;text-align:center;top:225.05px;">Disable</span><div style="left:576.00px;top:241.00px;width:80.60px;height:17.50px;border:1px solid #adadad;box-sizing:border-box;background:#ececec;border-radius:1px"></div><span class="t" style="left:566.30px;width:100px;text-align:center;top:245.05px;">Comment</span><div style="left:576.00px;top:261.00px;width:80.60px;height:17.50px;border:1px solid #adadad;box-sizing:border-box;background:#ececec;border-radius:1px"></div><span class="t" style="left:566.30px;width:100px;text-align:center;top:265.05px;">Copy</span><div style="left:576.00px;top:281.00px;width:80.60px;height:17.50px;border:1px solid #adadad;box-sizing:border-box;background:#ececec;border-radius:1px"></div><span class="t" style="left:566.30px;width:100px;text-align:center;top:285.05px;">Remove</span><div style="left:576.00px;top:301.00px;width:80.60px;height:17.50px;border:1px solid #adadad;box-sizing:border-box;background:#ececec;border-radius:1px"></div><span class="t" style="left:566.30px;width:100px;text-align:center;top:305.05px;">Reset Counters</span><div style="left:576.00px;top:321.00px;width:80.60px;height:17.50px;border:1px solid #adadad;box-sizing:border-box;background:#ececec;border-radius:1px"></div><span class="t" style="left:566.30px;width:100px;text-align:center;top:325.05px;">Reset All Counters</span>
</body></html>
